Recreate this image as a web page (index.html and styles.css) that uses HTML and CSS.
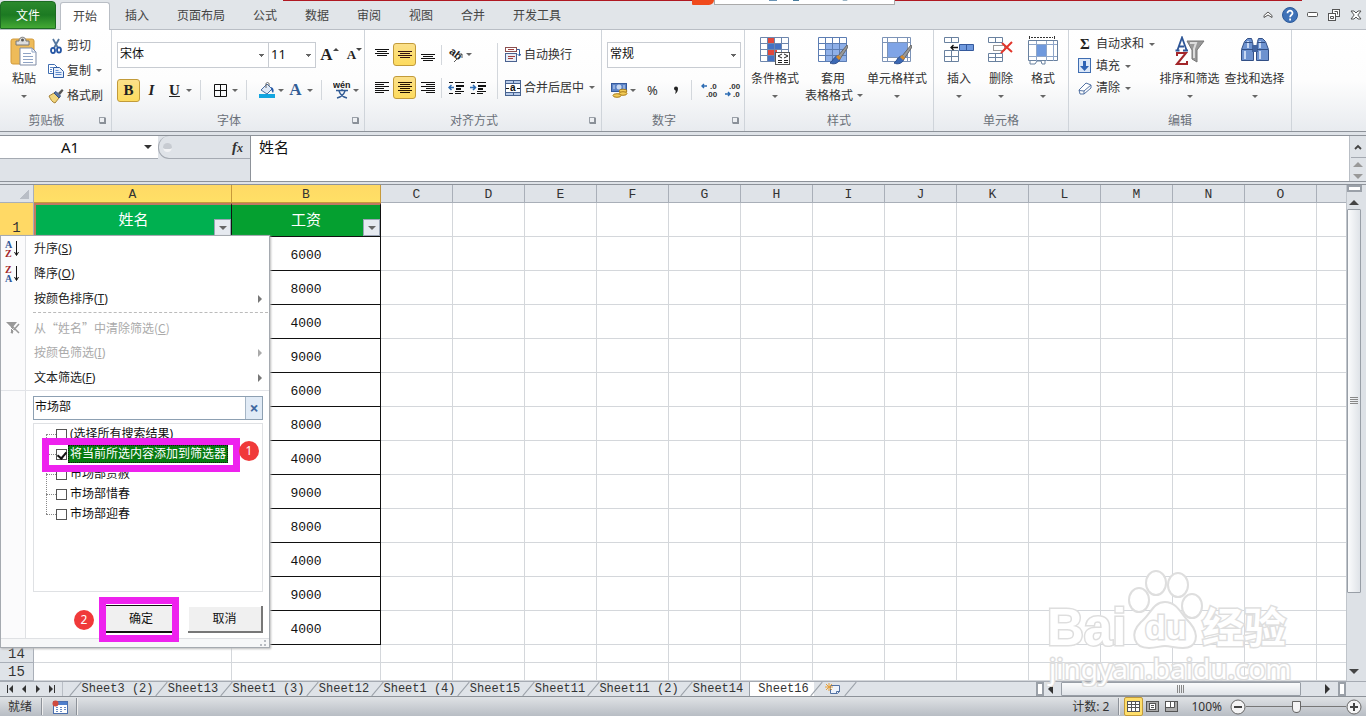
FILE: index.html
```html
<!DOCTYPE html>
<html lang="zh-CN">
<head>
  <meta charset="UTF-8">
  <meta name="viewport" content="width=device-width, initial-scale=1.0">
  <title>工资表</title>
  <link rel="stylesheet" href="styles.css">
</head>
<body>

  <!-- Ribbon tabs -->
  <nav class="tabbar">
    <div class="title-strip">
      <i class="strip-line left"></i><i class="strip-blob"></i><i class="strip-box"></i><i class="strip-line right"></i>
    </div>
    <button class="tab file">文件</button>
    <button class="tab active">开始</button>
    <button class="tab">插入</button>
    <button class="tab wide">页面布局</button>
    <button class="tab">公式</button>
    <button class="tab">数据</button>
    <button class="tab">审阅</button>
    <button class="tab">视图</button>
    <button class="tab">合并</button>
    <button class="tab wide">开发工具</button>
    <div class="win-buttons">
      <button aria-label="折叠"><svg width="10" height="8" viewBox="0 0 10 8"><path d="M1 4.500L5 1l4 3.500v2L5 4 1 6.500z" fill="#fff" stroke="#555" stroke-width="1"/></svg></button>
      <button aria-label="帮助"><svg width="16" height="16" viewBox="0 0 16 16"><circle cx="8" cy="8" r="7.500" fill="#3f72b8" stroke="#2d5a9a"/><path d="M5.500 6.200c0-3.400 5.200-3.200 5 0-.1 1.800-2.400 1.900-2.400 4M8.100 11.500v2" fill="none" stroke="#fff" stroke-width="1.800"/></svg></button>
      <button aria-label="最小化"><svg width="12" height="6" viewBox="0 0 12 6"><rect x=".5" y=".5" width="10" height="4" rx="1" fill="#fff" stroke="#555"/></svg></button>
      <button aria-label="还原"><svg width="13" height="12" viewBox="0 0 13 12"><rect x="4.500" y=".5" width="7" height="7" fill="#fff" stroke="#555"/><rect x=".5" y="4.500" width="7" height="7" fill="#fff" stroke="#555"/><path d="M2.500 7.500h3v2h-3zM6.500 2.500h3v3" fill="none" stroke="#555"/></svg></button>
      <button aria-label="关闭"><svg width="12" height="10" viewBox="0 0 12 10"><path d="M1 1h3l2 2 2-2h3L7.800 5 11 9H8L6 7 4 9H1l3.200-4z" fill="#fff" stroke="#555"/></svg></button>
    </div>
  </nav>

  <!-- Ribbon -->
  <section class="ribbon">
    <div class="group g-clip">
      <div class="group-body">
        <button class="big paste">
          <svg width="30" height="30" viewBox="0 0 30 30"><rect x="2" y="3" width="23" height="25" rx="2" fill="#eebb59" stroke="#d29a3b"/><path d="M7 5h3c0-5 7-5 7 0h3v4H7z" fill="#ddd" stroke="#777"/><circle cx="13.500" cy="4" r="1.500" fill="#555"/><path d="M11 12h12l4 4v13H11z" fill="#fff" stroke="#7e8ba5"/><path d="M23 12v4h4M14 17.500h8M14 20.500h10M14 23.500h10M14 26.500h10" fill="none" stroke="#8fa3c4"/></svg>
          <span>粘贴</span><i class="arr"></i>
        </button>
        <div class="stack rows25">
          <button><svg width="16" height="16" viewBox="0 0 16 16"><path d="M5 1l5 9M11 1L6 10" stroke="#54779f" stroke-width="1.800" fill="none"/><ellipse cx="5" cy="12.500" rx="2" ry="2.600" fill="none" stroke="#2455a4" stroke-width="1.800"/><ellipse cx="11" cy="12" rx="2" ry="2.600" fill="none" stroke="#2455a4" stroke-width="1.800"/></svg>剪切</button>
          <button><svg width="16" height="16" viewBox="0 0 16 16"><path d="M.5 1.500h6l3 3v6h-9z" fill="#fff" stroke="#3f6db1"/><path d="M5.500 4.500h6l4 4v6h-10z" fill="#e8f0fb" stroke="#2f5ca3"/><path d="M2 4.500h3M2 6.500h2M2 8.500h2M7.500 7.500h3M7.500 9.500h6M7.500 11.500h6" stroke="#5f8acb"/></svg>复制<i class="arr"></i></button>
          <button><svg width="16" height="16" viewBox="0 0 16 16"><path d="M1 8l5-3 5 5-4 5c-3-1-4-3-6-7z" fill="#f1d57c" stroke="#a78338"/><path d="M6 5l2-1.500L12.500 8 11 10z" fill="#5a76a5" stroke="#35507d"/><path d="M10 5l4-4 1.500 1.500L12 7z" fill="#555"/></svg>格式刷</button>
        </div>
      </div>
      <div class="group-label">剪贴板<i class="launcher"></i></div>
    </div>

    <div class="group g-font">
      <div class="group-body column">
        <div class="tool-row">
          <select class="combo font-name" aria-label="字体"><option>宋体</option></select>
          <select class="combo font-size" aria-label="字号"><option>11</option></select>
          <button class="tool grow" aria-label="增大字号"><b class="serif big-a">A</b><i class="tri up"></i></button>
          <button class="tool grow" aria-label="减小字号"><b class="serif small-a">A</b><i class="tri down"></i></button>
        </div>
        <div class="tool-row">
          <button class="tool on"><b class="serif">B</b></button>
          <button class="tool"><b class="serif"><em>I</em></b></button>
          <button class="tool"><b class="serif"><u>U</u></b></button>
          <i class="arr"></i><i class="vsep"></i>
          <button class="tool" aria-label="边框"><svg width="13" height="13" viewBox="0 0 13 13"><path d="M.5 .5h12v12H.5zM6.500 0v13M0 6.500h13" fill="none" stroke="#111"/></svg></button>
          <i class="arr"></i><i class="vsep"></i>
          <button class="tool" aria-label="填充颜色"><svg width="18" height="16" viewBox="0 0 18 16"><rect x="1" y="12" width="16" height="4" fill="#12a5e0"/><path d="M3 8l6-6 5 5-5 5z" fill="#dfe9f7" stroke="#4a6ea3"/><path d="M8 6V2c0-2 3-2 3 0v2" fill="none" stroke="#666"/><path d="M13 5c3 1 3 4 2 6-1-1-2-3-2-6z" fill="#255ba9"/></svg></button>
          <i class="arr"></i>
          <button class="tool" aria-label="字体颜色"><b class="serif blue">A</b></button>
          <i class="arr"></i><i class="vsep"></i>
          <button class="tool" aria-label="拼音"><svg width="18" height="18" viewBox="0 0 18 18"><text x="0" y="7" font-family="Liberation Sans" font-size="9" font-weight="bold" fill="#222">wén</text><path d="M3 9.500h12M9 8v2M6 10c1 3 4 6 8 7M12 10c-1 3-4 6-8 7" fill="none" stroke="#335d96" stroke-width="1.400"/></svg></button>
          <i class="arr"></i>
        </div>
      </div>
      <div class="group-label">字体<i class="launcher"></i></div>
    </div>

    <div class="group g-align">
      <div class="group-body">
        <div class="align-grid">
          <button class="tool" aria-label="顶端对齐"><svg width="14" height="14" viewBox="0 0 14 14"><path d="M0 1.500h14M2 3.500h10M0 5.500h14M2 7.500h10" stroke="#111"/></svg></button>
          <button class="tool on" aria-label="垂直居中"><svg width="14" height="14" viewBox="0 0 14 14"><path d="M0 3.500h14M2 5.500h10M0 7.500h14M2 9.500h10" stroke="#311"/></svg></button>
          <button class="tool" aria-label="底端对齐"><svg width="14" height="14" viewBox="0 0 14 14"><path d="M0 6.500h14M2 8.500h10M0 10.500h14M2 12.500h10" stroke="#111"/></svg></button>
          <i class="vsep"></i>
          <button class="tool" aria-label="方向"><svg class="spill" width="18" height="16" viewBox="0 0 18 16"><text x="1" y="7" font-family="Liberation Sans" font-size="11" font-weight="bold" fill="#222" transform="rotate(38 3 7)">ab</text><path d="M7 15l8-8M15 11V7h-4" fill="none" stroke="#555"/></svg></button>
          <i class="arr"></i>
          <button class="tool" aria-label="左对齐"><svg width="14" height="14" viewBox="0 0 14 14"><path d="M0 1.500h14M0 3.500h9M0 5.500h14M0 7.500h9M0 9.500h14M0 11.500h9" stroke="#111"/></svg></button>
          <button class="tool on" aria-label="居中"><svg width="14" height="14" viewBox="0 0 14 14"><path d="M0 1.500h14M2 3.500h10M0 5.500h14M2 7.500h10M0 9.500h14M2 11.500h10" stroke="#210"/></svg></button>
          <button class="tool" aria-label="右对齐"><svg width="14" height="14" viewBox="0 0 14 14"><path d="M0 1.500h14M5 3.500h9M0 5.500h14M5 7.500h9M0 9.500h14M5 11.500h9" stroke="#111"/></svg></button>
          <i class="vsep"></i>
          <button class="tool" aria-label="减少缩进"><svg width="16" height="14" viewBox="0 0 16 14"><path d="M1 1.500h4M7 1.500h9M8 4.500h8M8 7.500h5M7 10.500h9M1 12.500h4M7 12.500h6" stroke="#111"/><path d="M8 5.500h8M8 8.500h5" stroke="#111"/><path d="M6 6.500H1M3.500 4L1 6.500 3.500 9" fill="none" stroke="#2b6bb3" stroke-width="1.500"/></svg></button>
          <button class="tool" aria-label="增加缩进"><svg width="16" height="14" viewBox="0 0 16 14"><path d="M1 1.500h4M7 1.500h9M8 4.500h8M8 7.500h5M7 10.500h9M1 12.500h4M7 12.500h6" stroke="#111"/><path d="M8 5.500h8M8 8.500h5" stroke="#111"/><path d="M0 6.500h5M3 4l2.500 2.500L3 9" fill="none" stroke="#2b6bb3" stroke-width="1.500"/></svg></button>
        </div>
        <i class="vsep tall"></i>
        <div class="stack rows33">
          <button><svg width="16" height="16" viewBox="0 0 16 16"><rect x=".5" y=".5" width="11" height="4" fill="#fff" stroke="#8b5050"/><rect x=".5" y="6.500" width="11" height="8" fill="#e8edf6" stroke="#4a6290"/><path d="M3 9.500h7M3 11.500h5M3 2.500h6" stroke="#a04040"/><path d="M12 2.500h2.500v6M12.500 7l2 2 1.500-2" fill="none" stroke="#2f5ca3"/></svg>自动换行</button>
          <button><svg width="16" height="16" viewBox="0 0 16 16"><rect x=".5" y=".5" width="15" height="15" fill="#b7cbea" stroke="#47628f"/><path d="M0 3.500h16M0 12.500h16M8.500 0v4M8.500 12v4" stroke="#47628f"/><rect x="1" y="4" width="14" height="8" fill="#fff"/><path d="M1 8.500h3M12 8.500h3" stroke="#111"/><text x="5" y="11" font-family="Liberation Sans" font-weight="bold" font-size="10" fill="#111">a</text></svg>合并后居中<i class="arr"></i></button>
        </div>
      </div>
      <div class="group-label">对齐方式<i class="launcher"></i></div>
    </div>

    <div class="group g-number">
      <div class="group-body column">
        <div class="tool-row">
          <select class="combo num-format" aria-label="数字格式"><option>常规</option></select>
        </div>
        <div class="tool-row">
          <button class="tool" aria-label="会计数字格式"><svg width="18" height="16" viewBox="0 0 18 16"><rect x="1.500" y="1.500" width="15" height="8" fill="#5c83c6" stroke="#34599c"/><circle cx="9" cy="5" r="2.500" fill="#c9d9f2"/><path d="M4 3v4M14 3v4" stroke="#c9d9f2"/><ellipse cx="13" cy="9" rx="4" ry="1.800" fill="#f2cb57" stroke="#ab7d1a"/><ellipse cx="13" cy="11.500" rx="4" ry="1.800" fill="#f2cb57" stroke="#ab7d1a"/><ellipse cx="7" cy="13.500" rx="4" ry="1.800" fill="#f2cb57" stroke="#ab7d1a"/></svg></button>
          <i class="arr"></i>
          <button class="tool pct">%</button>
          <button class="tool" aria-label="千位分隔样式"><svg width="6" height="10" viewBox="0 0 6 10"><path d="M1 3.500a2 2 0 1 1 4 0C5 6 4 8 2 9c.6-1.500.8-2.500.6-3.500A2 2 0 0 1 1 3.500z" fill="#222"/></svg></button>
          <i class="vsep"></i>
          <button class="tool" aria-label="增加小数位数"><svg class="spill" width="18" height="16" viewBox="0 0 18 16"><path d="M6 4H1M3 2L1 4l2 2" fill="none" stroke="#2b6bb3" stroke-width="1.400"/><text x="9" y="7" class="dec">.0</text><text x="5" y="15" class="dec">.00</text></svg></button>
          <button class="tool" aria-label="减少小数位数"><svg class="spill" width="18" height="16" viewBox="0 0 18 16"><text x="5" y="7" class="dec">.00</text><path d="M1 12h5M4 10l2 2-2 2" fill="none" stroke="#2b6bb3" stroke-width="1.400"/><text x="9" y="15" class="dec">.0</text></svg></button>
        </div>
      </div>
      <div class="group-label">数字<i class="launcher"></i></div>
    </div>

    <div class="group g-styles">
      <div class="group-body">
        <button class="big w60">
          <svg width="30" height="30" viewBox="0 0 30 30"><path d="M1 2h27v24H1z" fill="#fff"/><path d="M8 2h6v6H8zM8 14h9v6H8z" fill="#e0483c"/><path d="M8 8h13v6H8zM8 20h6v6H8z" fill="#4472c4"/><path d="M.5 1.500h28v24H.5zM7.500 2v24M14.500 2v24M21.500 2v24M1 7.500h27M1 13.500h27M1 19.500h27" fill="none" stroke="#6d86ad"/><rect x="15.500" y="16.500" width="14" height="12" fill="#fff" stroke="#555"/><path d="M22 18l-4 2 4 2M18 24.500h4M18 26.500h4M24 18l4 2-4 2M24 24.500h4M24 26.500h4" fill="none" stroke="#222"/></svg>
          <span>条件格式</span><i class="arr"></i>
        </button>
        <button class="big w60">
          <svg width="30" height="30" viewBox="0 0 30 30"><path d="M1 2h28v24H1z" fill="#fff"/><path d="M8 8h21v18H8z" fill="#8fb0e8"/><path d="M.5 1.500h28v24H.5zM7.500 2v24M14.500 2v24M21.500 2v24M1 7.500h28M1 13.500h28M1 19.500h28" fill="none" stroke="#5c7db3"/><path d="M29 9L20 20l2 3 8-12z" fill="#999" stroke="#666"/><path d="M20 20c-4 0-5 5-8 7 4 2 9 0 10-4z" fill="#3c69b5" stroke="#2b4e8d"/><path d="M19 20l3 3" stroke="#d48a2c" stroke-width="3"/></svg>
          <span>套用</span><span class="second">表格格式<i class="arr"></i></span>
        </button>
        <button class="big w68">
          <svg width="30" height="30" viewBox="0 0 30 30"><path d="M1 2h28v24H1z" fill="#fff"/><path d="M6 7h20v14H6z" fill="#7fa4e6"/><path d="M.5 1.500h28v24H.5zM5.500 2v24M25.500 2v24M1 6.500h28M1 21.500h28M15.500 2v5M15.500 21v5" fill="none" stroke="#7c93b7"/><path d="M29 9L20 20l2 3 8-12z" fill="#999" stroke="#666"/><path d="M20 20c-4 0-5 5-8 7 4 2 9 0 10-4z" fill="#3c69b5" stroke="#2b4e8d"/><path d="M19 20l3 3" stroke="#d48a2c" stroke-width="3"/></svg>
          <span>单元格样式</span><i class="arr"></i>
        </button>
      </div>
      <div class="group-label">样式</div>
    </div>

    <div class="group g-cells">
      <div class="group-body">
        <button class="big w42">
          <svg width="30" height="30" viewBox="0 0 30 30"><path d="M.5 1.500h14v5H.5zM7.500 2v5M.5 14.500h14v11H.5zM7.500 15v11M1 20.500h14" fill="#fff" stroke="#69819f"/><path d="M15.500 8.500h14v6h-14z" fill="#6f99dd" stroke="#34599c"/><path d="M22.500 9v6" stroke="#34599c"/><path d="M14 11.500H7M9.500 9L7 11.500l2.500 2.500" fill="none" stroke="#111" stroke-width="1.300"/></svg>
          <span>插入</span><i class="arr"></i>
        </button>
        <button class="big w42">
          <svg width="30" height="30" viewBox="0 0 30 30"><path d="M2.500 1.500h14v5h-14zM9.500 2v5M2.500 17.500h14v8h-14zM9.500 18v8M3 21.500h14" fill="#fff" stroke="#69819f"/><path d="M7.500 9.500h11v5h-11z" fill="none" stroke="#333" stroke-dasharray="1 1"/><path d="M16 7l10 9M26 6L15 17" stroke="#e2362b" stroke-width="2"/></svg>
          <span>删除</span><i class="arr"></i>
        </button>
        <button class="big w42">
          <svg width="30" height="30" viewBox="0 0 30 30"><path d="M1.500 0v3M26.500 0v3" stroke="#333"/><path d="M3 1.500h22" stroke="#333" stroke-dasharray="2 1"/><path d="M.5 4.500h29v20H.5z" fill="#fff" stroke="#69819f"/><path d="M8.500 5v20M18.500 5v20M25.500 5v20M1 8.500h28M1 20.500h28" stroke="#8fa6c9"/><path d="M9 9h9v11H9z" fill="#6f99dd"/><path d="M2 25v3h5l2-3h4l1 3h3v-3" fill="#fff" stroke="#69819f"/></svg>
          <span>格式</span><i class="arr"></i>
        </button>
      </div>
      <div class="group-label">单元格</div>
    </div>

    <div class="group g-edit">
      <div class="group-body">
        <div class="stack rows22">
          <button><b class="serif sigma">Σ</b>自动求和<i class="arr"></i></button>
          <button><svg width="14" height="16" viewBox="0 0 14 16"><rect x=".5" y=".5" width="12" height="14" fill="#dbe7f8" stroke="#3f6db1"/><path d="M5 3h3v5h3l-4.500 5L2 8h3z" fill="#2d62b5"/></svg>填充<i class="arr"></i></button>
          <button><svg width="14" height="14" viewBox="0 0 14 14"><path d="M1 9l7-7 5 2v3l-7 6H2z" fill="#fff" stroke="#5372a3"/><path d="M1 9.500l5 .5 7-6M6 10v3" fill="none" stroke="#5372a3"/></svg>清除<i class="arr"></i></button>
        </div>
        <button class="big w66">
          <svg width="30" height="30" viewBox="0 0 30 30"><path d="M12 5h17l-7 9v12l-5-3v-9z" fill="#999" stroke="#777"/><path d="M15 7h6l-2 6v9" fill="none" stroke="#ddd" stroke-width="2"/><path d="M.5 14.500h4M8 14.500h5M2.500 14L7 1.500 11.500 14M4 10.500h5" fill="none" stroke="#2e5697" stroke-width="1.800"/><path d="M2 20v-3h9L2 28h10v-3" fill="none" stroke="#a3262a" stroke-width="2"/></svg>
          <span>排序和筛选</span><i class="arr"></i>
        </button>
        <button class="big w66">
          <svg width="30" height="30" viewBox="0 0 30 30"><path d="M7.500 2.500h4l1 3 1 7v12h-12v-11l3-8zM18.500 2.500h4l3 3 3 8v11h-12v-12l1-7z" fill="#6d92cf" stroke="#324f85"/><path d="M12 9h6v7h-6z" fill="#41639f"/><path d="M5 15v8M20 15v8M8 5v7M20 5v7" stroke="#c7d8f3" stroke-width="2"/><path d="M2 13.500h11M17 13.500h11M5 6.500h7M18 6.500h7" stroke="#324f85"/></svg>
          <span>查找和选择</span><i class="arr"></i>
        </button>
      </div>
      <div class="group-label">编辑</div>
    </div>
  </section>

  <!-- Formula bar -->
  <section class="formula-bar">
    <div class="name-area">
      <div class="name-box"><input type="text" value="A1" aria-label="名称框"><i class="arr dark"></i></div>
      <div class="fx-area"><i class="fx-dot"></i><button class="fx" aria-label="插入函数"><em>f<small>x</small></em></button></div>
    </div>
    <textarea class="formula" aria-label="编辑栏">姓名</textarea>
    <div class="formula-side">
      <button aria-label="展开编辑栏"><svg width="8" height="6" viewBox="0 0 8 6"><path d="M1 5l3-3 3 3" fill="none" stroke="#444" stroke-width="1.800"/></svg></button>
      <i class="tri up"></i><i class="tri down"></i>
    </div>
  </section>

  <!-- Worksheet -->
  <main class="sheet">
    <div class="grid-wrap" id="grid-wrap">
      <table class="grid">
        <thead id="grid-head"></thead>
        <tbody id="grid-body"></tbody>
      </table>

      <!-- Filter menu -->
      <div class="filter-menu">
        <ul class="menu-items">
          <li><button><svg width="18" height="18" viewBox="0 0 18 18"><text x="1" y="8" class="az b">A</text><text x="1" y="17" class="az r">Z</text><path d="M12.500 1v14M10.500 12l2 3.500 2-3.500" fill="none" stroke="#111"/></svg><span>升序(<u>S</u>)</span></button></li>
          <li><button><svg width="18" height="18" viewBox="0 0 18 18"><text x="1" y="8" class="az r">Z</text><text x="1" y="17" class="az b">A</text><path d="M12.500 1v14M10.500 12l2 3.500 2-3.500" fill="none" stroke="#111"/></svg><span>降序(<u>O</u>)</span></button></li>
          <li><button><span>按颜色排序(<u>T</u>)</span><i class="tri right"></i></button></li>
          <li class="dashed"></li>
          <li><button disabled><svg width="18" height="18" viewBox="0 0 18 18"><path d="M2 3h11L9 8v7l-2-2V8z" fill="#999"/><path d="M7 6l8 8M15 5l-8 9" stroke="#999" stroke-width="1.500"/><path d="M3 5l9 9" stroke="#fff"/></svg><span class="quoted">从“姓名”中清除筛选(<u>C</u>)</span></button></li>
          <li><button disabled><span>按颜色筛选(<u>I</u>)</span><i class="tri right"></i></button></li>
          <li><button><span>文本筛选(<u>F</u>)</span><i class="tri right"></i></button></li>
        </ul>
        <div class="filter-body">
          <div class="search"><input type="text" value="市场部" aria-label="搜索"><button aria-label="清除搜索">×</button></div>
          <div class="tree">
            <label><input type="checkbox"><span>(选择所有搜索结果)</span></label>
            <label class="picked"><input type="checkbox" checked><span>将当前所选内容添加到筛选器</span></label>
            <label><input type="checkbox"><span>市场部贾赦</span></label>
            <label><input type="checkbox"><span>市场部惜春</span></label>
            <label><input type="checkbox"><span>市场部迎春</span></label>
            <div class="mark-option"></div>
            <span class="badge">1</span>
          </div>
          <div class="actions">
            <span class="badge">2</span>
            <span class="mark-ok"><button class="ok">确定</button></span>
            <button class="cancel">取消</button>
          </div>
        </div>
        <div class="grip"><svg width="8" height="8" viewBox="0 0 8 8"><path d="M5 1h2v2H5zM1 5h2v2H1zM5 5h2v2H5z" fill="#b8bcc2"/></svg></div>
      </div>
    </div>
    <div class="vscroll">
      <i class="split"></i><i class="tri up"></i>
      <div class="thumb"><i></i></div>
      <div class="rest"></div>
      <i class="tri down"></i>
    </div>

    <svg class="watermark" width="250" height="134" viewBox="0 0 250 134">
      <g fill="#fff" stroke="#dedede" stroke-width="2">
        <ellipse cx="95" cy="47" rx="10" ry="12"/><ellipse cx="112" cy="30" rx="10" ry="12"/><ellipse cx="134" cy="32" rx="10" ry="12"/><ellipse cx="148" cy="53" rx="10" ry="12"/>
        <path d="M121 49c-12 0-14 12-24 20-12 12-7 26 8 26 8 0 10-2 16-2s10 2 18 2c14 0 17-13 7-25-9-9-13-21-25-21z"/>
        <g paint-order="stroke" stroke-width="3">
          <text x="3" y="92" class="wm-latin">Bai</text>
          <text x="101" y="86" class="wm-du">du</text>
          <text x="158" y="90" class="wm-cjk">经验</text>
          <text x="5" y="126" class="wm-url">jingyan.baidu.com</text>
        </g>
      </g>
    </svg>
  </main>

  <!-- Sheet tabs -->
  <div class="sheet-bar">
    <div class="sheet-nav">
      <button aria-label="第一张"><svg width="8" height="8" viewBox="0 0 8 8"><path d="M1.500 0v8" stroke="#333"/><path d="M7 0v8L3 4z" fill="#333"/></svg></button>
      <button aria-label="上一张"><svg width="8" height="8" viewBox="0 0 8 8"><path d="M6 0v8L2 4z" fill="#333"/></svg></button>
      <button aria-label="下一张"><svg width="8" height="8" viewBox="0 0 8 8"><path d="M2 0v8l4-4z" fill="#333"/></svg></button>
      <button aria-label="最后一张"><svg width="8" height="8" viewBox="0 0 8 8"><path d="M6.500 0v8" stroke="#333"/><path d="M1 0v8l4-4z" fill="#333"/></svg></button>
    </div>
    <div class="sheet-tabs">
      <button class="c10">Sheet3 (2)</button><button>Sheet13</button><button class="c10">Sheet1 (3)</button><button>Sheet12</button><button class="c10">Sheet1 (4)</button><button>Sheet15</button><button>Sheet11</button><button class="c11">Sheet11 (2)</button><button>Sheet14</button><button class="current">Sheet16</button><button class="new" aria-label="插入工作表"><svg width="16" height="12" viewBox="0 0 16 12"><path d="M5.500 2.500h9v6l-2 2h-7z" fill="#eef3fb" stroke="#5372a3"/><path d="M11.500 11V8.500H15" fill="none" stroke="#5372a3"/><path d="M4 0v8M0 4h8M1 1l6 6M7 1L1 7" stroke="#e8a13a"/></svg></button><i class="last-edge"></i>
    </div>
    <div class="hscroll">
      <i class="split"></i><i class="tri left"></i>
      <div class="thumb"><i></i></div>
      <div class="rest"></div>
      <i class="tri right"></i><i class="split"></i>
    </div>
  </div>

  <!-- Status bar -->
  <footer class="status">
    <span class="ready">就绪</span><i class="ssep"></i>
    <button class="macro" aria-label="录制宏"><svg width="16" height="14" viewBox="0 0 16 14"><rect x="1.500" y="1.500" width="14" height="12" fill="#fff" stroke="#4a6fae"/><path d="M2 2h13v3H2z" fill="#4f7fcc"/><path d="M4 7.500h2M8 7.500h2M12 7.500h2M4 9.500h2M8 9.500h2M12 9.500h2M4 11.500h2M8 11.500h2" stroke="#6a8cc4"/><circle cx="3.500" cy="3.500" r="3" fill="#cf4a3e"/></svg></button>
    <i class="ssep"></i>
    <span class="count">计数: 2</span><i class="ssep"></i>
    <button class="view on" aria-label="普通"><svg width="13" height="11" viewBox="0 0 13 11"><rect x=".5" y=".5" width="12" height="10" fill="#fff" stroke="#555"/><path d="M0 3.500h13M0 6.500h13M4.500 0v11M8.500 0v11" stroke="#555"/></svg></button>
    <button class="view" aria-label="页面布局"><svg width="13" height="11" viewBox="0 0 13 11"><rect x=".5" y=".5" width="12" height="10" fill="#aaa" stroke="#555"/><rect x="3.500" y="2.500" width="6" height="6" fill="#fff" stroke="#555"/><path d="M5 4.500h3M5 6.500h3" stroke="#555"/></svg></button>
    <button class="view" aria-label="分页预览"><svg width="13" height="11" viewBox="0 0 13 11"><rect x=".5" y=".5" width="12" height="10" fill="#aaa" stroke="#555"/><path d="M1 1h4v6H1zM6 1h3v6H6z" fill="#fff"/><path d="M5.500 1v5.500H1M9.500 1v5.500H5" fill="none" stroke="#555"/></svg></button>
    <span class="zoom-value">100%</span>
    <button class="round" aria-label="缩小"><svg width="16" height="16" viewBox="0 0 16 16"><circle cx="8" cy="8" r="7" fill="#f4f4f5" stroke="#666"/><path d="M4 8h8" stroke="#444" stroke-width="2"/></svg></button>
    <input class="zoom" type="range" min="0" max="100" value="50" aria-label="显示比例">
    <button class="round" aria-label="放大"><svg width="16" height="16" viewBox="0 0 16 16"><circle cx="8" cy="8" r="7" fill="#f4f4f5" stroke="#666"/><path d="M4 8h8M8 4v8" stroke="#444" stroke-width="2"/></svg></button>
  </footer>

  <script>
    const salary = [6000, 8000, 4000, 9000, 6000, 8000, 4000, 9000, 8000, 4000, 9000, 4000];

    // Only as many columns and rows as the window can show
    const wrap = document.getElementById("grid-wrap");
    const colCount = Math.min(26, 2 + Math.ceil((wrap.clientWidth - 381) / 72));
    const rowCount = 13 + Math.ceil(Math.max(0, wrap.clientHeight - 460) / 18);
    const letters = "ABCDEFGHIJKLMNOPQRSTUVWXYZ".slice(0, colCount).split("");

    // Column headers
    document.getElementById("grid-head").innerHTML =
      '<tr><th class="corner"></th>' +
      letters.map(l => `<th class="col-${l}">${l}</th>`).join("") + "</tr>";

    // Rows: 1 is the heading, 2-13 hold the data, the others are empty
    let rows = "";
    for (let r = 1; r <= rowCount; r++) {
      const cells = letters.map(l => {
        if (r === 1 && l === "A") return '<td class="head-a">姓名<button class="drop" aria-label="筛选"><i class="arr"></i></button></td>';
        if (r === 1 && l === "B") return '<td class="head-b">工资<button class="drop" aria-label="筛选"><i class="arr"></i></button></td>';
        if (r <= 13 && l === "B") return `<td class="money">${salary[r - 2]}</td>`;
        return "<td></td>";
      }).join("");
      rows += `<tr class="${r <= 13 ? "tall" : ""}"><th>${r === 1 || r > 13 ? r : ""}</th>${cells}</tr>`;
    }
    document.getElementById("grid-body").innerHTML = rows;
  </script>

</body>
</html>
```
FILE: styles.css
```css
* {
  margin: 0;
  padding: 0;
  box-sizing: border-box;
}
body {
  display: flex;
  flex-direction: column;
  height: 100vh;
  overflow: hidden;
  font-family: "Noto Sans", "Noto Sans CJK SC", sans-serif;
  font-size: 12px;
  line-height: 16px;
  color: #333;
  background: #dfe3e8;
}
button, input, select, textarea {
  font: inherit;
  color: inherit;
  border: 0;
  background: none;
  border-radius: 0;
}
button {
  display: flex;
  align-items: center;
  white-space: nowrap;
}
svg {
  display: block;
  flex: none;
}
.spill { overflow: visible; }
i {
  flex: none;
}

/* Arrows */
.arr, .tri {
  display: inline-block;
  width: 0;
  height: 0;
  border: 3px solid transparent;
}
.arr {
  border-top-color: #666;
  border-bottom: 0;
}
.arr.dark {
  border-width: 4px 4px 0;
  border-top-color: #333;
}
.tri.up { border-bottom-color: #444; border-top: 0; }
.tri.down { border-top-color: #444; border-bottom: 0; }
.tri.left { border-right-color: #333; border-left: 0; }
.tri.right { border-left-color: #777; border-right: 0; }

/* Ribbon tabs */
.tabbar {
  position: relative;
  display: flex;
  align-items: flex-end;
  flex: none;
  height: 30px;
  background: #e1e5e9;
  border-bottom: 1px solid #b9bec5;
}
.title-strip {
  position: absolute;
  top: 0;
  left: 283px;
  display: flex;
  width: 1019px;
}
.strip-line {
  height: 1px;
  background: #b01822;
}
.strip-line.left { width: 409px; }
.strip-line.right { flex: 1; }
.strip-blob {
  width: 22px;
  height: 5px;
  background: #f04a1c;
  border-radius: 0 0 18px 4px;
}
.strip-box {
  width: 181px;
  height: 5px;
  background: radial-gradient(ellipse 5px 1px at 58px 0, #6a93b5 90%, transparent), radial-gradient(ellipse 4px 1px at 81px 0, #4a7c9c 90%, transparent), radial-gradient(ellipse 3px 1px at 130px 0, #9bb4c4 90%, transparent), #fff;
  border: 1px solid #aaa;
  border-top: 0;
}
.tab {
  justify-content: center;
  width: 52px;
  height: 28px;
  padding-top: 2px;
  color: #444;
}
.tab.wide { width: 76px; }
.tab.file {
  width: 56px;
  margin-right: 4px;
  color: #fff;
  background: linear-gradient(#2c8a2d, #1c7a22 50%, #44a935);
  border: 1px solid #1c6b22;
  border-radius: 4px 4px 0 0;
}
.tab.active {
  width: 50px;
  margin: 0 1px -1px 0;
  padding-top: 0;
  background: #fff;
  border: 1px solid #b9bec5;
  border-bottom: 0;
  border-radius: 3px 3px 0 0;
}
.win-buttons {
  display: flex;
  align-items: center;
  gap: 9px;
  height: 28px;
  margin-left: auto;
  padding-right: 4px;
}

/* Ribbon */
.ribbon {
  display: flex;
  flex: none;
  height: 102px;
  background: linear-gradient(#fff, #fdfdfd 50%, #e8ebef);
  border-bottom: 1px solid #8d9299;
}
.group {
  display: flex;
  flex-direction: column;
  flex: none;
  padding-top: 3px;
  border-right: 1px solid #cfd4da;
}
.group-body {
  display: flex;
  height: 78px;
}
.group-body.column {
  flex-direction: column;
  padding: 9px 0 0 5px;
  gap: 9px;
}
.group-label {
  position: relative;
  height: 20px;
  line-height: 20px;
  text-align: center;
  color: #6a7079;
  padding-right: 18px;
}
.g-styles .group-label, .g-cells .group-label, .g-edit .group-label { padding-right: 0; }
.launcher {
  position: absolute;
  right: 5px;
  top: 6px;
  width: 7px;
  height: 7px;
  border: 1px solid #9aa0a8;
  border-right-color: transparent;
  border-bottom-color: transparent;
}
.launcher::after {
  content: "";
  position: absolute;
  right: -1px;
  bottom: -1px;
  width: 4px;
  height: 4px;
  border-right: 2px solid #8a9098;
  border-bottom: 2px solid #8a9098;
}
.g-clip { width: 112px; }
.g-font { width: 253px; }
.g-align { width: 237px; }
.g-number { width: 143px; }
.g-styles { width: 189px; }
.g-cells { width: 135px; }
.g-edit { width: 223px; }

.big {
  flex-direction: column;
  flex: none;
  height: 74px;
  padding-top: 3px;
}
.big span { margin-top: 5px; }
.big .arr { margin-top: 8px; }
.big .second {
  margin-top: 1px;
  padding-left: 2px;
}
.big .second .arr { margin: 0 0 3px 4px; }
.paste { width: 48px; }
.w60 { width: 58px; }
.w68 { width: 70px; }
.w42 { width: 42px; }
.w66 { width: 65px; }
.g-styles .group-body { padding-left: 1px; }
.g-cells .group-body { padding-left: 4px; }
.g-edit .group-body { padding-left: 9px; }

.stack {
  display: flex;
  flex-direction: column;
}
.stack button { gap: 3px; }
.stack .arr { margin-left: 2px; }
.rows25 button { height: 25px; }
.rows22 { width: 79px; }
.rows22 button {
  height: 22px;
  gap: 4px;
}
.rows22 .arr { margin-left: 1px; }
.rows33 {
  padding: 5px 0 0 7px;
}
.rows33 button { height: 33px; }

.tool-row {
  display: flex;
  align-items: center;
  height: 26px;
}
.tool {
  justify-content: center;
  flex: none;
  width: 23px;
  height: 23px;
}
.tool.on {
  background: linear-gradient(#fbe08a, #fddb5e);
  border: 1px solid #c29b3a;
  border-radius: 3px;
}
.serif {
  font-family: "Liberation Serif", serif;
  font-size: 15px;
  color: #222;
}
.serif.blue { color: #335d96; font-size: 17px; }
.serif.big-a { font-size: 17px; }
.serif.small-a { font-size: 13px; }
.serif.sigma { width: 14px; text-align: center; }
.tool.grow { margin-left: 2px; }
.grow .tri { align-self: flex-start; margin-top: 4px; }
.vsep {
  width: 1px;
  height: 20px;
  margin: 0 8px;
  background: #d3d7dc;
}
.combo {
  appearance: none;
  flex: none;
  height: 26px;
  padding: 0 2px 2px;
  font-size: 12px;
  color: #111;
  background-color: #fff;
  background-image: linear-gradient(#666, #666), linear-gradient(#666, #666), linear-gradient(#666, #666);
  background-size: 5px 1px, 3px 1px, 1px 1px;
  background-position: right 4px top 11px, right 5px top 12px, right 6px top 13px;
  background-repeat: no-repeat;
  border: 1px solid #c8ccd2;
}
.font-name { width: 152px; }
.font-size { width: 47px; border-left: 0; font-size: 13px; }
.num-format { width: 134px; }
.dec {
  font: bold 8px "Liberation Sans", sans-serif;
  fill: #333;
}
.g-number .tool-row .vsep { margin: 0 6px 0 4px; }
.pct { font-size: 13px; margin-left: 5px; }
.align-grid {
  display: grid;
  grid-template-columns: 23px 23px 23px 5px 22px 22px;
  grid-auto-rows: 33px;
  align-items: center;
  width: 124px;
  margin-left: 5px;
  padding-top: 5px;
}
.align-grid .vsep { margin: 0 2px; }
.vsep.tall {
  height: 56px;
  margin: 10px 0 0 3px;
}

/* Formula bar */
.formula-bar {
  display: flex;
  flex: none;
  height: 47px;
  margin: 3px 0 2px;
  border-top: 1px solid #8d9299;
  border-bottom: 1px solid #8d9299;
}
.name-area {
  display: flex;
  width: 251px;
  border-right: 1px solid #8d9299;
}
.name-box {
  display: flex;
  align-items: center;
  width: 158px;
  height: 23px;
  padding-right: 6px;
  background: #fff;
  border-bottom: 1px solid #a5aab2;
}
.name-box input {
  flex: 1;
  width: 0;
  padding-right: 4px;
  font-size: 15px;
  line-height: 20px;
  text-align: center;
  color: #111;
}
.fx-area {
  display: flex;
  align-items: center;
  justify-content: space-between;
  flex: 1;
  height: 23px;
  padding: 0 7px 0 4px;
  border: 1px solid #a5aab2;
  border-width: 0 0 1px 1px;
  border-radius: 11px 0 0 11px;
}
.fx-dot {
  width: 9px;
  height: 9px;
  border-radius: 50%;
  background: #c7cbd1;
  border-bottom: 3px solid #f2f3f5;
}
.fx {
  font-family: "Liberation Serif", serif;
  font-size: 15px;
  font-weight: bold;
}
.fx small { font-size: 12px; }
.formula {
  flex: 1;
  padding: 1px 8px;
  font-size: 15px;
  line-height: 21px;
  color: #111;
  background: #fff;
  resize: none;
  outline: 0;
}
.formula-side {
  display: flex;
  flex-direction: column;
  align-items: center;
  gap: 7px;
  width: 17px;
  border-left: 1px solid #b9bec5;
}
.formula-side button {
  justify-content: center;
  width: 15px;
  height: 22px;
  border-bottom: 1px solid #a5aab2;
}
.formula-side .tri {
  border-left-width: 5px;
  border-right-width: 5px;
}
.formula-side .tri.up { border-bottom: 5px solid #999; margin-top: -3px; }
.formula-side .tri.down { border-top: 5px solid #999; }

/* Worksheet */
.sheet {
  position: relative;
  display: flex;
  flex: 1;
  min-height: 0;
  border-top: 1px solid #8d9299;
}
.grid-wrap {
  position: relative;
  flex: 1;
  min-width: 0;
  overflow: hidden;
  background: #fff;
}
.grid {
  table-layout: fixed;
  width: 1px;
  border-spacing: 0;
}
.grid th, .grid td {
  width: 72px;
  height: 18px;
  padding-top: 2px;
  border-right: 1px solid #d4d7db;
  border-bottom: 1px solid #d4d7db;
  font-family: "Liberation Mono", "Noto Sans CJK SC", monospace;
  font-size: 13px;
  line-height: 15px;
  font-weight: normal;
  text-align: center;
}
.grid th {
  background: #dfe3e8;
  border-color: #a9afb8;
}
.grid .corner {
  width: 34px;
  background: linear-gradient(135deg, transparent 50%, #b9bec6 50%) no-repeat right 4px bottom 3px / 9px 9px #dfe3e8;
}
.grid .col-A { width: 198px; }
.grid .col-B { width: 149px; }
.grid .col-A, .grid .col-B {
  background: linear-gradient(#ffd965, #ffe066);
  border-color: #c79a3a;
}
.grid tbody th {
  font-size: 14px;
  vertical-align: bottom;
}
.grid tbody tr:first-child th {
  background: #ffd965;
}
.grid .tall td { height: 34px; }
.grid .head-a, .grid .head-b {
  position: relative;
  font-size: 15px;
  color: #fff;
  background: #00b050;
  border-top: 2px solid #c07a62;
  border-right: 1px solid #111;
}
.grid .head-a { border-left: 2px solid #c07a62; }
.grid .head-b { background: #05a030; }
.grid .money {
  padding-top: 3px;
  border-right-color: #111;
  border-bottom-color: #111;
  color: #111;
}
.grid .head-b { border-bottom-color: #111; }
.drop {
  position: absolute;
  right: 0;
  bottom: 0;
  justify-content: center;
  width: 17px;
  height: 17px;
  background: #e6eaf0;
  border: 1px solid #9aa5b5;
}
.drop .arr { border-width: 4px 4px 0; }

.watermark {
  position: absolute;
  right: 72px;
  bottom: -6px;
}
.wm-latin { font: bold 51px "Liberation Sans", sans-serif; }
.wm-du { font: bold 34px "Liberation Sans", sans-serif; }
.wm-cjk { font: bold 42px "Noto Sans CJK SC", sans-serif; }
.wm-url { font: 28px "Noto Sans", sans-serif; }

/* Filter menu */
.filter-menu {
  position: absolute;
  left: 0;
  top: 50px;
  width: 270px;
  color: #222;
  background: linear-gradient(90deg, #fbfbfc 24px, #dfe1e4 24px, #dfe1e4 25px, #fff 25px);
  border: 1px solid #a5aab0;
  box-shadow: 1px 1px 2px #bbb;
}
.menu-items {
  list-style: none;
  border-bottom: 1px solid #e2e4e8;
}
.menu-items button {
  width: 100%;
  height: 25px;
  padding: 0 7px 0 3px;
}
.menu-items span { flex: 1; text-align: left; margin-left: 12px; }
.menu-items span:first-child { margin-left: 30px; }
.menu-items .quoted { font-family: "Noto Sans CJK SC", sans-serif; }
.menu-items button:disabled { color: #aaa; }
.menu-items button:disabled .tri { border-left-color: #aaa; }
.menu-items .tri { border-width: 4px; border-right: 0; }
.menu-items .dashed {
  height: 2px;
  margin: 0 1px 2px 32px;
  border-bottom: 1px dashed #bbb;
}
.az { font: bold 10px "Liberation Serif", serif; }
.az.b { fill: #2e5697; }
.az.r { fill: #a3262a; }
.filter-body { padding: 5px 6px 0 32px; }
.search {
  display: flex;
  height: 24px;
  border: 1px solid #8da0b2;
}
.search input {
  flex: 1;
  width: 0;
  padding: 0 1px 2px;
  color: #111;
}
.search button {
  justify-content: center;
  width: 17px;
  font-size: 16px;
  font-weight: bold;
  color: #3f68a0;
  background: #e1ebf6;
  border-left: 1px solid #a6b6c6;
}
.tree {
  position: relative;
  height: 169px;
  margin-top: 3px;
  padding-left: 12px;
  border: 1px solid #dfe1e4;
}
.tree::before {
  content: "";
  position: absolute;
  left: 12px;
  top: 10px;
  height: 80px;
  border-left: 1px dotted #888;
}
.tree label {
  display: flex;
  align-items: center;
  height: 20px;
  color: #111;
}
.tree label::before {
  content: "";
  width: 10px;
  border-top: 1px dotted #888;
}
.tree input {
  appearance: none;
  width: 11px;
  height: 11px;
  background: #fff;
  border: 1px solid #555;
}
.tree input:checked::after {
  content: "";
  display: block;
  width: 4px;
  height: 7px;
  margin-left: 2px;
  border: solid #111;
  border-width: 0 2px 2px 0;
  transform: rotate(40deg);
}
.tree label span { padding: 0 1px 0 2px; margin-left: 1px; white-space: nowrap; }
.tree .picked span {
  height: 18px;
  padding: 0 1px;
  line-height: 16px;
  color: #fff;
  background: #087a10;
  border: 1px dotted #111;
}
.mark-option {
  position: absolute;
  left: 8px;
  top: 14px;
  width: 198px;
  height: 34px;
  border: 7px solid #ee22ee;
}
.badge {
  width: 20px;
  height: 20px;
  border-radius: 50%;
  font-size: 12px;
  line-height: 20px;
  text-align: center;
  color: #fff;
  background: #f03a3a;
}
.tree .badge {
  position: absolute;
  left: 205px;
  top: 17px;
}
.actions {
  display: flex;
  align-items: center;
  justify-content: flex-end;
  height: 39px;
  margin-top: 7px;
  padding-top: 2px;
}
.mark-ok {
  position: relative;
  flex: none;
  height: 45px;
  margin: 0 9px 0 5px;
  padding: 1px 0;
  border: 7px solid #ee22ee;
}
.ok, .cancel {
  justify-content: center;
  color: #111;
  background: #f0f0f0;
}
.ok {
  width: 66px;
  height: 28px;
  padding-left: 4px;
  border: solid #111;
  border-width: 1px 0 2px;
}
.cancel {
  width: 75px;
  height: 27px;
  border: solid #777;
  border-width: 0 2px 2px 0;
  box-shadow: inset 1px 1px #fff;
}
.grip {
  display: flex;
  justify-content: flex-end;
  padding: 0 2px;
  height: 9px;
  background: #f6f7f8;
  border-top: 1px solid #dfe1e4;
}

/* Scroll bars */
.vscroll {
  display: flex;
  flex-direction: column;
  align-items: center;
  width: 20px;
  padding-right: 5px;
  background: #dde1e6;
  border-left: 1px solid #c0c5cb;
}
.vscroll .tri {
  margin: 8px 0;
  border-width: 5px;
}
.vscroll .tri.up { border-top: 0; margin-bottom: 4px; }
.vscroll .tri.down { border-bottom: 0; margin-bottom: 7px; }
.split {
  width: 15px;
  height: 7px;
  background: #fff;
  border: 2px solid #9aa0a8;
}
.thumb {
  display: flex;
  align-items: center;
  justify-content: center;
  background: linear-gradient(90deg, #fafbfc, #dfe3e8);
  border: 1px solid #989ea6;
  border-radius: 1px;
}
.thumb i {
  width: 8px;
  height: 8px;
  background: repeating-linear-gradient(#888 0 1px, transparent 1px 2px);
}
.vscroll .thumb { width: 14px; flex: 385; }
.vscroll .rest { flex: 68; }

/* Sheet tabs */
.sheet-bar {
  display: flex;
  flex: none;
  height: 16px;
  background: #dfe3e8;
  border-top: 1px solid #a5aab2;
  border-bottom: 1px solid #8d9299;
}
.sheet-nav {
  display: flex;
  justify-content: space-between;
  align-items: center;
  width: 63px;
  padding: 0 6px;
  border-right: 1px solid #b9bec5;
}
.sheet-tabs {
  display: flex;
  flex: 1;
  min-width: 0;
  padding-left: 10px;
}
.sheet-tabs button {
  position: relative;
  justify-content: center;
  flex: none;
  width: 65px;
  padding-left: 3px;
  font-family: "Liberation Mono", monospace;
  font-size: 12px;
  line-height: 14px;
}
.sheet-tabs .c10 { width: 86px; }
.sheet-tabs .c11 { width: 93px; }
.sheet-tabs button::before, .last-edge {
  content: "";
  width: 1px;
  height: 18px;
  background: #9aa0a8;
  transform: rotate(40deg);
}
.sheet-tabs button::before {
  position: absolute;
  left: 2px;
  top: -2px;
}
.last-edge { margin: -2px 0 0 2px; }
.sheet-tabs .current {
  background: #fff;
  border-left: 1px solid #9aa0a8;
}
.sheet-tabs .current::before { display: none; }
.sheet-tabs .new { width: 34px; }
.hscroll {
  display: flex;
  align-items: center;
  width: 330px;
  padding-right: 20px;
}
.hscroll .split {
  width: 8px;
  height: 14px;
}
.hscroll .tri {
  margin: 0 8px 0 4px;
  border-width: 5px;
}
.hscroll .tri.left { border-left: 0; }
.hscroll .tri.right { border-right: 0; border-left-color: #333; }
.hscroll .thumb {
  flex: 241;
  height: 14px;
  background: linear-gradient(#fafbfc, #dfe3e8);
}
.hscroll .thumb i { background: repeating-linear-gradient(90deg, #888 0 1px, transparent 1px 2px); }
.hscroll .rest { flex: 20; }

/* Status bar */
.status {
  display: flex;
  align-items: center;
  flex: none;
  height: 19px;
  padding-right: 4px;
  background: linear-gradient(#dfe2e5, #b8bdc4);
}
.ready { width: 41px; padding-left: 8px; }
.ssep {
  width: 2px;
  height: 17px;
  background: #8d9299;
  border-right: 1px solid #eee;
}
.macro { width: 33px; justify-content: center; }
.count { margin: 0 9px 0 auto; }
.status .view {
  justify-content: center;
  width: 19px;
  height: 19px;
}
.status .view.on {
  margin-left: 4px;
  background: #ffdf6b;
  border: 1px solid #c29b3a;
  border-radius: 2px;
}
.zoom-value { margin: 0 8px 0 10px; }
.zoom {
  appearance: none;
  width: 100px;
  height: 16px;
  background: linear-gradient(#777, #777) no-repeat center / 100% 1px;
}
.zoom::-webkit-slider-thumb {
  appearance: none;
  width: 9px;
  height: 12px;
  background: #f4f4f5;
  border: 1px solid #666;
  border-radius: 1px 1px 5px 5px;
}
```
